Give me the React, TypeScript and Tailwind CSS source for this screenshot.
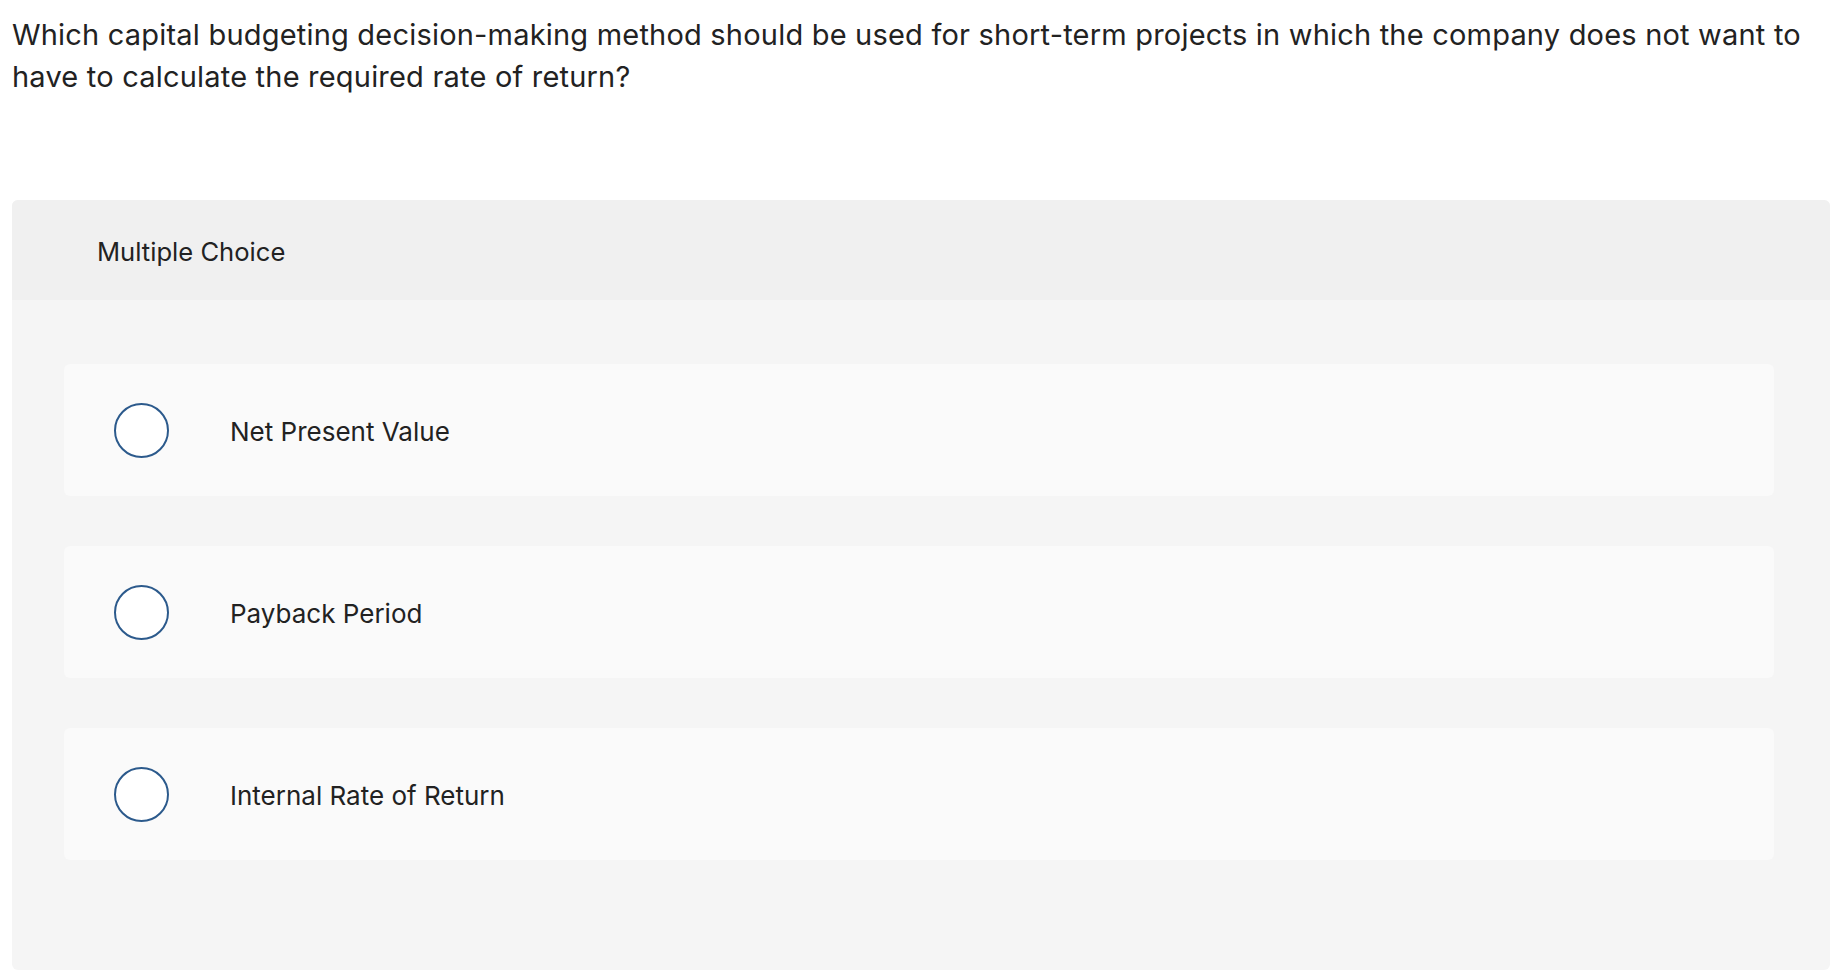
import React from 'react';

const choices = ['Net Present Value', 'Payback Period', 'Internal Rate of Return'];

const font = { fontFamily: 'Inter, "Noto Sans", sans-serif' };

export default function App() {
  return (
    <div className="min-h-screen bg-white px-[12px] text-[#222222]" style={font}>
      {/* Question */}
      <p className="pt-[14px] text-[29px] leading-[42px] tracking-[0.2px] w-[1815px]">
        Which capital budgeting decision-making method should be used for short-term projects in which the company does not want to have to calculate the required rate of return?
      </p>

      {/* Answer panel */}
      <div className="mt-[102px] w-[1818px] rounded-[6px] bg-[#f5f5f5] overflow-hidden">
        <div className="h-[100px] bg-[#f0f0f0] flex items-center pl-[85px] pt-[4px] text-[25.6px]">
          Multiple Choice
        </div>

        <div className="pt-[64px] pb-[110px] pl-[52px] pr-[56px] flex flex-col gap-[50px]">
          {choices.map(choice => (
            <div key={choice} className="h-[132px] rounded-[6px] bg-[#fafafa] flex items-center pl-[50px]">
              <span className="w-[55px] h-[55px] rounded-full border-2 border-[#2c5a8c] bg-white shrink-0" />
              <span className="ml-[61px] pt-[2px] text-[26px]">{choice}</span>
            </div>
          ))}
        </div>
      </div>
    </div>
  );
}
